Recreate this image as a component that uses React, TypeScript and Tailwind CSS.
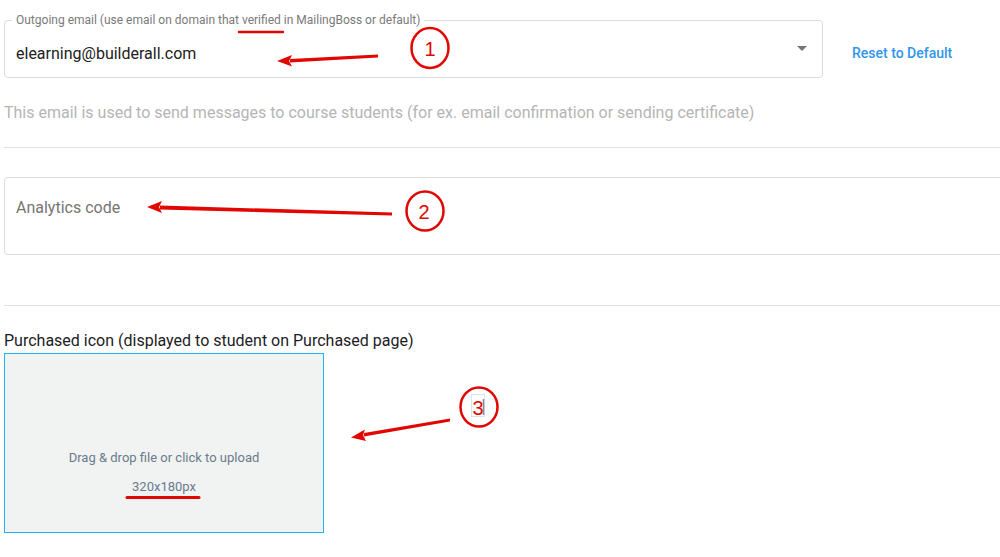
import React from "react";

function Annotations() {
    const red = "#e10600";
    return (
        <svg
            className="pointer-events-none absolute left-0 top-0"
            width={1000}
            height={557}
            viewBox="0 0 1000 557"
        >
            {/* 1 */}
            <line x1={239} y1={32} x2={283} y2={32} stroke={red} strokeWidth={2.5} strokeLinecap="round" />
            <polygon points="378,54.5 378,57.5 290,62.5 290,59" fill={red} />
            <polygon points="277,61 292,55 289,61 292,66.5" fill={red} />
            <ellipse cx={430} cy={48} rx={18.5} ry={20} fill="none" stroke={red} strokeWidth={2.5} />
            <text x={430} y={55.5} textAnchor="middle" fontFamily="Liberation Sans, Arial, sans-serif" fontSize={20} fill={red}>1</text>

            {/* 2 */}
            <polygon points="392,212.5 392,215.5 160,209.5 160,205.5" fill={red} />
            <polygon points="147,207 162,201 159,207 162,213" fill={red} />
            <ellipse cx={425} cy={211} rx={18.5} ry={19.5} fill="none" stroke={red} strokeWidth={2.5} />
            <text x={424} y={218.5} textAnchor="middle" fontFamily="Liberation Sans, Arial, sans-serif" fontSize={20} fill={red}>2</text>

            {/* 3 */}
            <polygon points="450,418.5 450,421.5 364,436.5 364,433" fill={red} />
            <polygon points="351,437.5 365,429.5 363,435 366,441" fill={red} />
            <ellipse cx={479} cy={407} rx={18.5} ry={19.5} fill="none" stroke={red} strokeWidth={2.5} />
            <rect x={471.5} y={394.5} width={13} height={22} fill="none" stroke="#d6e4f7" strokeWidth={1} />
            <text x={478} y={414.5} textAnchor="middle" fontFamily="Liberation Sans, Arial, sans-serif" fontSize={20} fill={red}>3</text>
            <line x1={483.5} y1={399} x2={483.5} y2={415} stroke="#8a8a8a" strokeWidth={1.5} />
            <line x1={127} y1={497.5} x2={199} y2={497.5} stroke={red} strokeWidth={3} strokeLinecap="round" />
        </svg>
    );
}

export default function App() {
    return (
        <div
            className="relative h-[557px] w-[1000px] overflow-hidden bg-white pl-1"
            style={{ fontFamily: "Roboto, 'Noto Sans', Arial, sans-serif" }}
        >
            {/* outgoing email */}
            <div className="mt-[13px] flex items-start">
                <fieldset className="w-[819px] rounded border border-[#dcdcdc] p-0">
                    <legend className="ml-[7px] px-1 text-[12px] leading-[14px] text-[#7a7a7a]">
                        Outgoing email (use email on domain that verified in MailingBoss or default)
                    </legend>
                    <div className="flex items-start justify-between pb-[11px] pl-[11px] pr-[15px] pt-[15px]">
                        <span className="text-[16px] leading-6 text-[#212121]">elearning@builderall.com</span>
                        <span className="mt-[4px] h-0 w-0 border-x-[5px] border-t-[5px] border-x-transparent border-t-[#757575]" />
                    </div>
                </fieldset>
                <button className="ml-[29px] mt-[32px] text-[14px] font-medium leading-4 text-[#2f96ec]">
                    Reset to Default
                </button>
            </div>

            <p className="mt-[23px] text-[16px] leading-6 text-[#b5b5b5]">
                This email is used to send messages to course students (for ex. email confirmation or sending certificate)
            </p>

            <div className="mt-[22px] h-px bg-[#e3e3e3]" />

            {/* analytics */}
            <div className="mt-[29px] h-[78px] w-[1010px] rounded border border-[#dcdcdc] px-[11px] pt-[18px]">
                <span className="text-[16px] leading-6 text-[#757575]">Analytics code</span>
            </div>

            <div className="mt-[50px] h-px bg-[#e3e3e3]" />

            {/* purchased icon */}
            <p className="mt-[23px] text-[16px] leading-6 text-[#1c1c24]">
                Purchased icon (displayed to student on Purchased page)
            </p>
            <div className="flex h-[180px] w-[320px] flex-col items-center border border-[#1fb4f0] bg-[#f1f2f2] pt-[94px] text-[13px] text-[#6b7b8c]">
                <span className="leading-5">Drag &amp; drop file or click to upload</span>
                <span className="mt-[9px] leading-5">320x180px</span>
            </div>

            <Annotations />
        </div>
    );
}
